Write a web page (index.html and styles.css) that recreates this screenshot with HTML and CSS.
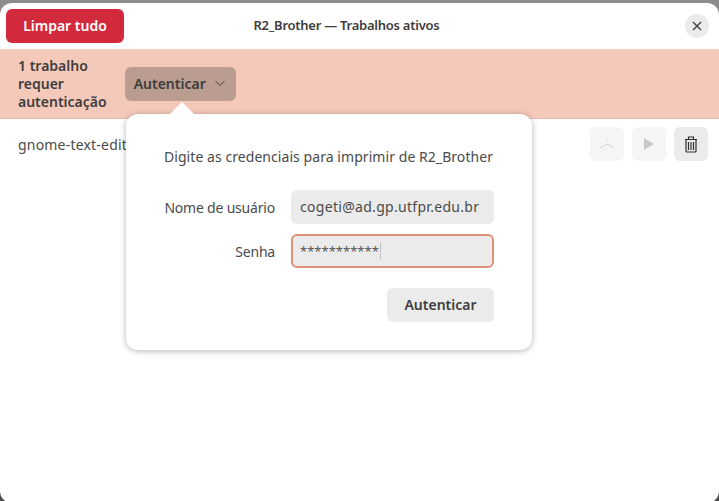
FILE: index.html
```html
<!DOCTYPE html>
<html lang="pt-BR">
<head>
    <meta charset="UTF-8">
    <meta name="viewport" content="width=device-width, initial-scale=1.0">
    <title>R2_Brother — Trabalhos ativos</title>
    <link rel="stylesheet" href="styles.css">
</head>
<body>
    <div class="window">
        <header class="titlebar">
            <button class="btn-clear">Limpar tudo</button>
            <div class="title">R2_Brother — Trabalhos ativos</div>
            <button class="btn-close" aria-label="Fechar">
                <svg width="10" height="10" viewBox="0 0 10 10"><path d="M1 1l8 8M9 1l-8 8" stroke="#3d3d3d" stroke-width="1.4" fill="none"/></svg>
            </button>
        </header>

        <div class="banner">
            <div class="banner-text">1 trabalho<br>requer<br>autenticação</div>
            <button class="btn-auth-menu">
                Autenticar
                <svg width="12" height="12" viewBox="0 0 12 12"><path d="M1.5 4l4.5 4.5L10.500 4" stroke="#4a3f3b" stroke-width="1" fill="none"/></svg>
            </button>
        </div>

        <div class="job-row">
            <div class="job-name">gnome-text-editor</div>
            <button class="icon-btn disabled" aria-label="Prioridade">
                <svg width="16" height="16" viewBox="0 0 16 16"><path d="M1 12l7-4 7 4" stroke="#d2d2d2" stroke-width="1" fill="none"/><circle cx="8" cy="4" r="0.8" fill="#d2d2d2"/></svg>
            </button>
            <button class="icon-btn disabled" aria-label="Retomar">
                <svg width="16" height="16" viewBox="0 0 16 16"><path d="M3 2l10 6-10 6z" fill="#c8c8c8"/></svg>
            </button>
            <button class="icon-btn" aria-label="Excluir">
                <svg width="14" height="17" viewBox="0 0 14 17"><path d="M1 3.500h12M4.500 3V1h5v2M2 4v11a1 1 0 0 0 1 1h8a1 1 0 0 0 1-1V4M4.500 6v8M7 6v8M9.500 6v8" stroke="#2e2e2e" stroke-width="1.200" fill="none"/></svg>
            </button>
        </div>

        <div class="popover">
            <p class="popover-msg">Digite as credenciais para imprimir de R2_Brother</p>
            <div class="form-grid">
                <label class="form-label" for="user">Nome de usuário</label>
                <div class="entry" id="user">cogeti@ad.gp.utfpr.edu.br</div>
                <label class="form-label" for="pass">Senha</label>
                <div class="entry focused" id="pass"><span class="stars">***********</span><span class="caret"></span></div>
            </div>
            <div class="popover-actions">
                <button class="btn-submit">Autenticar</button>
            </div>
        </div>
    </div>
</body>
</html>
```

FILE: styles.css
```css
* {
    box-sizing: border-box;
}

html, body {
    height: 100%;
}

body {
    margin: 0;
    padding-top: 3px;
    background: linear-gradient(#8c8c8c, #8c8c8c 50%, #4d4d4d);
    font-family: "Noto Sans", "Open Sans", sans-serif;
    font-size: 14px;
    color: #4a4a4a;
    overflow: hidden;
}

button {
    font-family: inherit;
    border: none;
    cursor: pointer;
}

.window {
    position: relative;
    height: 500px;
    background: white;
    border-radius: 12px;
    overflow: hidden;
}

.titlebar {
    display: flex;
    align-items: center;
    height: 46px;
    padding: 0 10px 0 6px;
}

.btn-clear {
    width: 118px;
    height: 34px;
    padding: 0 0 2px;
    background: #d3293d;
    color: white;
    font-size: 14px;
    font-weight: 600;
    border-radius: 6px;
}

.title {
    flex: 1;
    padding: 0 116px 2px 0;
    text-align: center;
    font-weight: 600;
    font-size: 13px;
    letter-spacing: -0.25px;
    color: #3d3d3d;
}

.btn-close {
    display: flex;
    align-items: center;
    justify-content: center;
    width: 24px;
    height: 24px;
    padding: 0;
    background: #ebebeb;
    border-radius: 50%;
}

.banner {
    display: flex;
    align-items: center;
    gap: 18px;
    height: 70px;
    padding: 0 18px;
    background: #f5c9ba;
    border-bottom: 1px solid #e3bbae;
    color: #3d3d3d;
}

.banner-text {
    font-weight: 600;
    line-height: 18px;
}

.btn-auth-menu {
    display: flex;
    align-items: center;
    gap: 8px;
    height: 34px;
    width: 111px;
    padding: 0 9px 1px;
    background: #ba9c90;
    color: #3d3d3d;
    font-size: 14px;
    font-weight: 600;
    border-radius: 6px;
}

.job-row {
    display: flex;
    align-items: center;
    gap: 8px;
    height: 50px;
    padding: 0 11px 0 18px;
}

.job-name {
    flex: 1;
    letter-spacing: 0.2px;
}

.icon-btn {
    display: flex;
    align-items: center;
    justify-content: center;
    width: 34px;
    height: 34px;
    padding: 0;
    background: #ebebeb;
    border-radius: 6px;
}

.icon-btn.disabled {
    background: #f5f5f5;
}

.popover {
    position: absolute;
    left: 126px;
    top: 111px;
    width: 406px;
    height: 236px;
    padding: 33px 38px 28px;
    background: white;
    border-radius: 12px;
    box-shadow: 0 1px 6px rgba(0, 0, 0, 0.3);
}

.popover::before {
    content: "";
    position: absolute;
    left: 44px;
    top: -12px;
    border-left: 12px solid transparent;
    border-right: 12px solid transparent;
    border-bottom: 12px solid white;
}

.popover-msg {
    margin: 0 0 24px;
    line-height: 19px;
    white-space: nowrap;
    letter-spacing: 0.06px;
}

.form-grid {
    display: grid;
    grid-template-columns: 111px 203px;
    column-gap: 16px;
    row-gap: 10px;
    align-items: center;
}

.form-label {
    text-align: right;
    white-space: nowrap;
    letter-spacing: -0.2px;
}

.entry {
    display: flex;
    align-items: center;
    height: 34px;
    padding: 0 9px 1px;
    background: #ebebeb;
    border-radius: 6px;
    white-space: nowrap;
    letter-spacing: 0.3px;
}

.entry.focused {
    border: 2px solid #de9078;
    padding: 0 7px;
}

.stars {
    font-size: 13px;
    letter-spacing: 0;
    color: #555;
}

.caret {
    width: 1px;
    height: 18px;
    margin-left: 1px;
    background: #c4c4c4;
}

.popover-actions {
    display: flex;
    justify-content: flex-end;
    margin-top: 20px;
}

.btn-submit {
    width: 107px;
    height: 34px;
    padding: 0 0 2px;
    background: #ebebeb;
    color: #3d3d3d;
    font-size: 14px;
    font-weight: 600;
    border-radius: 6px;
}
```
